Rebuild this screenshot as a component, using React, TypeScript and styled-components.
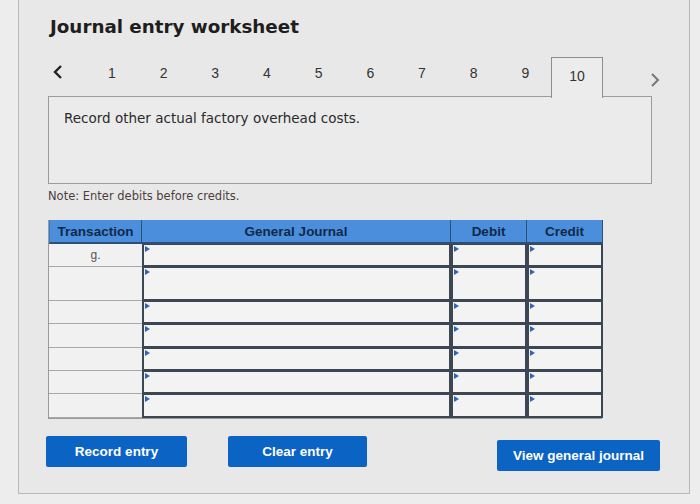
import { createGlobalStyle, styled } from "styled-components";

const GlobalStyle = createGlobalStyle`
  html, body {
    margin: 0;
    padding: 0;
    background: #ededed;
  }
  * {
    box-sizing: border-box;
  }
`;

const tabs = ["1", "2", "3", "4", "5", "6", "7", "8", "9", "10"];
const rowCount = 7;

function App() {
  return (
    <>
      <GlobalStyle />
      <Panel>
        <Title>Journal entry worksheet</Title>
        <TabNav>
          <Arrow>
            <svg width="12" height="16" viewBox="0 0 12 16">
              <polyline points="9,2 3,8 9,14" fill="none" stroke="#222" strokeWidth="2.4" />
            </svg>
          </Arrow>
          {tabs.map((t) => (
            <Tab key={t} $active={t === "10"}>
              {t}
            </Tab>
          ))}
          <NextArrow>
            <svg width="12" height="16" viewBox="0 0 12 16">
              <polyline points="3,2 9,8 3,14" fill="none" stroke="#777" strokeWidth="2" />
            </svg>
          </NextArrow>
        </TabNav>
        <ContentBox>Record other actual factory overhead costs.</ContentBox>
        <Note>Note: Enter debits before credits.</Note>
        <Table>
          <HeadCell>Transaction</HeadCell>
          <HeadCell>General Journal</HeadCell>
          <HeadCell>Debit</HeadCell>
          <HeadCell>Credit</HeadCell>
          {Array.from({ length: rowCount }).map((_, i) => (
            <Row key={i}>
              <TransCell>{i === 0 ? "g." : ""}</TransCell>
              <InputCell />
              <InputCell />
              <InputCell />
            </Row>
          ))}
        </Table>
        <ButtonRow>
          <Button $width={141}>Record entry</Button>
          <Button $width={139}>Clear entry</Button>
          <Button $width={163} $push>
            View general journal
          </Button>
        </ButtonRow>
      </Panel>
    </>
  );
}

export default App;

const Panel = styled.div`
  display: flex;
  flex-direction: column;
  margin-left: 18px;
  width: 672px;
  height: 494px;
  padding: 15px 0 0 29px;
  background: #e8e8e8;
  border: 1px solid #b9b9b9;
  border-top: none;
`;

const Title = styled.h1`
  margin: 0 0 0 2px;
  height: 24px;
  line-height: 24px;
  font-family: "DejaVu Sans", Verdana, sans-serif;
  font-size: 18.3px;
  font-weight: bold;
  color: #1e1e1e;
`;

const TabNav = styled.div`
  display: flex;
  align-items: stretch;
  margin-top: 18px;
  height: 40px;
  position: relative;
  z-index: 1;
`;

const Arrow = styled.div`
  display: flex;
  align-items: center;
  width: 38px;
  padding: 0 0 10px 4px;
`;

const NextArrow = styled(Arrow)`
  width: auto;
  padding: 6px 0 0 46px;
`;

const Tab = styled.div<{ $active?: boolean }>`
  display: flex;
  align-items: center;
  justify-content: center;
  width: 51.7px;
  padding-bottom: ${(p) => (p.$active ? "4px" : "10px")};
  font-family: "Liberation Sans", Arial, sans-serif;
  font-size: 14px;
  color: #333;
  border: 1px solid ${(p) => (p.$active ? "#8e8e8e" : "transparent")};
  border-bottom: none;
  background: ${(p) => (p.$active ? "#ececec" : "transparent")};
  margin-bottom: ${(p) => (p.$active ? "-1px" : "0")};
`;

const ContentBox = styled.div`
  width: 604px;
  height: 88px;
  margin-top: -1px;
  padding: 12px 15px;
  background: #ebebeb;
  border: 1px solid #9c9c9c;
  font-family: "DejaVu Sans", Verdana, sans-serif;
  font-size: 13.5px;
  line-height: 18px;
  color: #2a2a2a;
`;

const Note = styled.div`
  margin-top: 4px;
  line-height: 16px;
  font-family: "DejaVu Sans", Verdana, sans-serif;
  font-size: 11.5px;
  color: #4e3e3e;
`;

const Table = styled.div`
  display: grid;
  grid-template-columns: 93px 309px 76px 76px;
  grid-template-rows: 24px 23px 34px 23px 24px 23px 23px 24px;
  margin-top: 16px;
  width: 554px;
  border-left: 1px solid #9a9a9a;
  border-bottom: 1px solid #9a9a9a;
`;

const HeadCell = styled.div`
  display: flex;
  align-items: center;
  justify-content: center;
  background: #4b8fdc;
  border-right: 1px solid #2d4f78;
  border-bottom: 2px solid #2d4f78;
  font-family: "Liberation Sans", Arial, sans-serif;
  font-size: 13.5px;
  font-weight: bold;
  color: #10284a;

  &:first-child {
    border-left: 1px solid #3a7cc8;
  }
`;

const Row = styled.div`
  display: contents;
`;

const TransCell = styled.div`
  display: flex;
  align-items: center;
  justify-content: center;
  background: #f1f1f1;
  border-bottom: 1px solid #a8a8a8;
  font-family: "Liberation Sans", Arial, sans-serif;
  font-size: 12px;
  color: #555;
`;

const InputCell = styled.div`
  position: relative;
  background: #f3f3f3;
  border: 2px solid #3d4753;
  border-top-width: 1px;

  &::before {
    content: "";
    position: absolute;
    top: 1px;
    left: 1px;
    border-top: 3px solid transparent;
    border-bottom: 3px solid transparent;
    border-left: 5px solid #2f66b3;
  }
`;

const ButtonRow = styled.div`
  display: flex;
  align-items: flex-start;
  gap: 41px;
  margin: 17px 0 0 -2px;
  width: 614px;
`;

const Button = styled.button<{ $width: number; $push?: boolean }>`
  width: ${(p) => p.$width}px;
  height: 31px;
  margin-left: ${(p) => (p.$push ? "auto" : "0")};
  margin-top: ${(p) => (p.$push ? "4px" : "0")};
  border: none;
  border-radius: 2px;
  background: #0b63c4;
  color: #fff;
  font-family: "Liberation Sans", Arial, sans-serif;
  font-size: 13.5px;
  font-weight: bold;
  cursor: pointer;
`;
